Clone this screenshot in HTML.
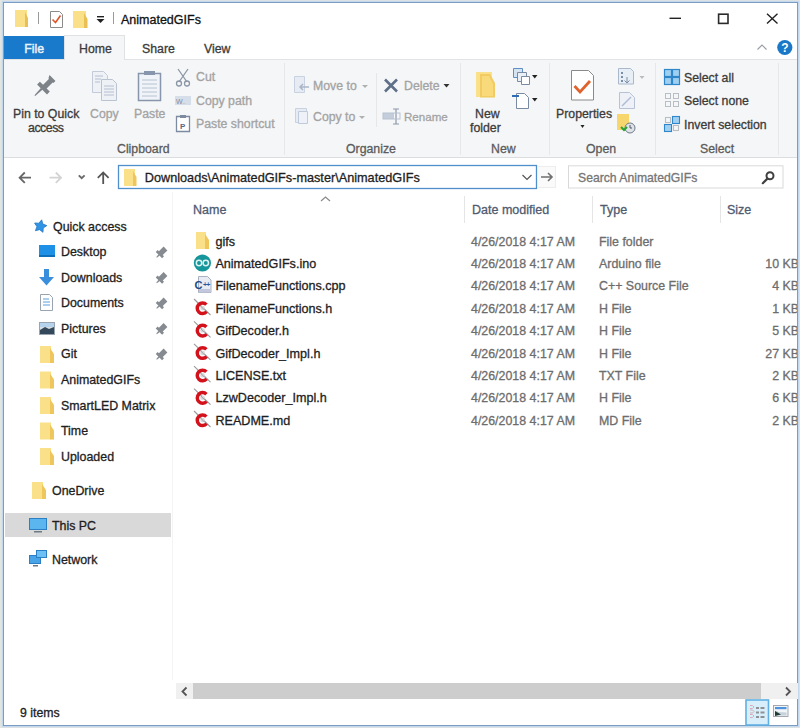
<!DOCTYPE html>
<html><head><meta charset="utf-8">
<style>
*{margin:0;padding:0;box-sizing:border-box}
html,body{width:800px;height:728px;overflow:hidden;background:#e3e5e1}
body{position:relative;font-family:"Liberation Sans",sans-serif;font-size:12.3px;color:#222}
.a{position:absolute}
.t{position:absolute;white-space:nowrap;line-height:16px;height:16px;-webkit-text-stroke-width:0.3px}
svg{position:absolute;overflow:visible}
#win{position:absolute;left:2.7px;top:1.9px;width:795.4px;height:724.2px;background:#fff;border:1.3px solid #7b9dc4;box-shadow:0 0 0 1.2px #c3d7ee}
.g{color:#a3a3a3}
.d{color:#3b3b3b}
.lab{color:#5b5b5b}
.sep{position:absolute;width:1px;background:#e6e7e8}
.fl{color:#1e1e1e;font-size:12.6px}
.fg{color:#6d6d6d;font-size:12.4px}
.nv{color:#1e1e1e;font-size:12.4px}
</style></head><body>
<div id="win"></div>

<!-- title bar -->
<svg style="left:0;top:0" width="800" height="60">
  <!-- folder 1 -->
  <path d="M15 10h12v17h-12z" fill="#f5d36b"/>
  <path d="M15 10h12v17h-12z" fill="#fbe08a"/>
  <path d="M25 12l3 6v9h-3z" fill="#e9c053"/>
  <!-- sep -->
  <rect x="38" y="12" width="1" height="12" fill="#9a9a9a"/>
  <!-- properties icon -->
  <path d="M50.5 11.5h9l3 3v13h-12z" fill="#fff" stroke="#8b8b8b"/>
  <path d="M52.5 19.5l3 3l5-7" fill="none" stroke="#e0542a" stroke-width="1.6"/>
  <!-- folder 2 -->
  <path d="M73 11h13v17h-13z" fill="#fbe08a"/>
  <path d="M84 13l3.5 6v9h-3.5z" fill="#e9c053"/>
  <!-- dropdown -->
  <rect x="97" y="16" width="7" height="1.4" fill="#222"/>
  <path d="M96.5 19h8l-4 4z" fill="#222"/>
  <rect x="113" y="12" width="1" height="12" fill="#9a9a9a"/>
  <!-- window controls -->
  <rect x="669.5" y="17.6" width="11.5" height="1.4" fill="#222"/>
  <rect x="718.6" y="14.2" width="9.4" height="9.2" fill="none" stroke="#2a2a2a" stroke-width="1.6"/>
  <path d="M767 13.8l10.5 9.8M777.5 13.8l-10.5 9.8" stroke="#222" stroke-width="1.4"/>
  <!-- ribbon collapse caret + help -->
  <path d="M757.5 49.5l4.5-4.5l4.5 4.5" fill="none" stroke="#9aa0a6" stroke-width="1.2"/>
  <circle cx="784.8" cy="47.5" r="7.6" fill="#1a78c8"/>
  <text x="785" y="52" font-family="Liberation Sans" font-size="12" font-weight="bold" fill="#fff" text-anchor="middle">?</text>
</svg>
<div class="t" style="left:121px;top:11.5px;font-size:12.5px;color:#111">AnimatedGIFs</div>

<!-- tabs -->
<div class="a" style="left:4px;top:35.5px;width:60px;height:24px;background:#1979ca"></div>
<div class="t" style="left:24.3px;top:40.8px;color:#e8f3fa;font-size:12.3px;-webkit-text-stroke-width:0.45px">File</div>
<div class="a" style="left:64px;top:35px;width:61px;height:25px;background:#f5f6f7;border:1px solid #e0e1e2;border-bottom:none"></div>
<div class="t d" style="left:79px;top:41px">Home</div>
<div class="t d" style="left:142px;top:41px">Share</div>
<div class="t d" style="left:204px;top:41px">View</div>

<!-- ribbon -->
<div class="a" style="left:4px;top:59.3px;width:793px;height:98.9px;background:#f5f6f7;border-top:1px solid #e2e3e4;border-bottom:1px solid #dcdddf"></div>
<div class="a" style="left:65px;top:59px;width:59px;height:1.5px;background:#f5f6f7"></div>


<!-- ribbon separators -->
<div class="sep" style="left:284px;top:63px;height:92px"></div>
<div class="sep" style="left:376px;top:73px;height:54px"></div>
<div class="sep" style="left:460px;top:63px;height:92px"></div>
<div class="sep" style="left:549px;top:63px;height:92px"></div>
<div class="sep" style="left:655px;top:63px;height:92px"></div>
<div class="sep" style="left:778px;top:63px;height:92px"></div>

<svg style="left:0;top:0" width="800" height="160">
  <!-- pin -->
  <g fill="#7d8389" transform="translate(52.5 78) rotate(45)">
    <path d="M-4.2 0h8.4v3h-1v8.5h4.5v4h-14v-4h4.5v-8.5h-1z"/>
    <path d="M-1.1 15h2.2l-0.6 10h-1z"/>
  </g>
  <!-- copy -->
  <path d="M92.5 71.5h11l4 4v17h-15z" fill="#eef1f6" stroke="#c3cbd8"/>
  <path d="M101.5 79.5h11l4 4v17h-15z" fill="#eef1f6" stroke="#b9c3d2"/>
  <g stroke="#b6c0cf"><path d="M95 76h8M95 79h6M95 82h5M104 86h10M104 89h10M104 92h10M104 95h10"/></g>
  <!-- paste -->
  <path d="M138.5 73.5h22v27h-22z" fill="#f0f3f8" stroke="#8796ad" stroke-width="1.5"/>
  <path d="M144 71h11v4h-11z" fill="#8796ad"/>
  <g stroke="#b7c2d2"><path d="M142 80h15M142 84h15M142 88h15M142 92h15M142 96h15"/></g>
  <!-- scissors -->
  <g fill="none" stroke="#8b96a6" stroke-width="1.3">
    <path d="M178 69l9 13M188 69l-9 13"/>
    <circle cx="179" cy="83.5" r="2.5"/><circle cx="187" cy="83.5" r="2.5"/>
  </g>
  <!-- copy path -->
  <rect x="175" y="96" width="16" height="9" fill="#d6deea"/>
  <text x="176" y="104" font-family="Liberation Sans" font-size="7" fill="#7f8da3">W<tspan font-size="5">..</tspan></text>
  <!-- paste shortcut -->
  <path d="M176.5 116.5h13v15h-13z" fill="#fff" stroke="#7d8ba0" stroke-width="1.3"/>
  <path d="M180 115h6v3h-6z" fill="#7d8ba0"/>
  <text x="180" y="129" font-family="Liberation Sans" font-size="8" font-weight="bold" fill="#5a6780">P</text>
  <!-- move to -->
  <path d="M294.5 76.5h10v16h-10z" fill="#e7ecf4" stroke="#c8d2e0"/>
  <path d="M309 87h-8M303 84l-3 3l3 3" fill="none" stroke="#aab6c8" stroke-width="1.5"/>
  <!-- copy to -->
  <path d="M295.5 108.5h11v14h-11z" fill="#e7ecf4" stroke="#c8d2e0"/>
  <path d="M298.5 111.5h9v12h-9z" fill="#eef2f8" stroke="#bfcadb"/>
  <!-- dropdown carets gray -->
  <path d="M362 85h6l-3 3z" fill="#b0b0b0"/>
  <path d="M359 116h6l-3 3z" fill="#b0b0b0"/>
  <!-- delete -->
  <path d="M385 79.5l12 12M397 79.5l-12 12" stroke="#5e6f88" stroke-width="2.6"/>
  <path d="M443.5 84h6l-3 3.5z" fill="#333"/>
  <!-- rename -->
  <rect x="383" y="113" width="11" height="6" fill="#c3cddc"/>
  <path d="M396 109v15M393 109h6M393 124h6" stroke="#8b98ac" stroke-width="1.2" fill="none"/>
  <rect x="383" y="113" width="17" height="6" fill="none" stroke="#b6c1d1"/>
  <!-- new folder -->
  <path d="M476 72h16v25h-16z" fill="#fbe08a"/>
  <path d="M480 74h10l5 9v14.5h-15z" fill="#f2cc62"/>
  <path d="M482 76h7l4 8v12h-11z" fill="#f8da7a"/>
  <!-- easy access -->
  <path d="M513.5 68.5h9v9h-9z" fill="#d5e4f3" stroke="#5f8fc4"/>
  <path d="M517.5 72.5h9v9h-9z" fill="#eaf0f7" stroke="#7a8aa0"/>
  <path d="M521.5 76.5h8v8h-8z" fill="#fff" stroke="#7a8aa0"/>
  <path d="M532 75h5.5l-2.75 3.5z" fill="#222"/>
  <!-- new item -->
  <path d="M516.5 93.5h8l4 4v11h-12z" fill="#fff" stroke="#7a8aa0"/>
  <path d="M512 96h7" stroke="#2d6db5" stroke-width="2"/>
  <path d="M532 98h5.5l-2.75 3.5z" fill="#222"/>
  <!-- properties big -->
  <path d="M571.5 70.5h17l5 5v24.5h-22z" fill="#fff" stroke="#8a8a8a"/>
  <path d="M574.5 86l5.5 6l10-11" fill="none" stroke="#e0622d" stroke-width="2.8"/>
  <path d="M580.5 125h4l-2 3z" fill="#222"/>
  <!-- open -->
  <path d="M618.5 68.5h12l3 3v12.5h-15z" fill="#e8eef6" stroke="#aab8cc"/>
  <g fill="#7b8ea8"><rect x="621" y="72" width="2" height="2"/><rect x="621" y="76" width="2" height="2"/><rect x="621" y="80" width="2" height="2"/></g>
  <path d="M627 77v6M624.5 80.5l2.5 2.5l2.5-2.5" stroke="#7b8ea8" fill="none"/>
  <path d="M639.5 76h5l-2.5 3z" fill="#bbb"/>
  <!-- edit -->
  <path d="M619.5 92.5h10l5 5v11h-15z" fill="#eef2f8" stroke="#b7c3d4"/>
  <path d="M622 106l9-9" stroke="#aebbd0" stroke-width="1.5"/>
  <!-- history -->
  <path d="M617 114h12v16h-12z" fill="#f7d76d"/>
  <circle cx="630" cy="128" r="5" fill="#dfe3e8" stroke="#6e7a88"/>
  <path d="M630 125v3h2" stroke="#4d5866" fill="none"/>
  <path d="M621 127l3 3l3-3" stroke="#2aa039" stroke-width="2" fill="none"/>
  <!-- select all -->
  <g fill="#9fd0f2" stroke="#2f86c9" stroke-width="1.2">
    <rect x="664.5" y="69.5" width="7" height="7"/><rect x="672.5" y="69.5" width="7" height="7"/>
    <rect x="664.5" y="77.5" width="7" height="7"/><rect x="672.5" y="77.5" width="7" height="7"/>
  </g>
  <!-- select none -->
  <g fill="none" stroke="#b9bec5">
    <rect x="665.5" y="93.5" width="5" height="5"/><rect x="673.5" y="93.5" width="5" height="5"/>
    <rect x="665.5" y="101.5" width="5" height="5"/><rect x="673.5" y="101.5" width="5" height="5"/>
  </g>
  <!-- invert -->
  <g stroke-width="1.1">
    <rect x="665.5" y="117.5" width="5" height="5" fill="none" stroke="#b9bec5"/>
    <rect x="672.5" y="116.5" width="7" height="7" fill="#9fd0f2" stroke="#2f86c9"/>
    <rect x="664.5" y="124.5" width="7" height="7" fill="#9fd0f2" stroke="#2f86c9"/>
    <rect x="673.5" y="125.5" width="5" height="5" fill="none" stroke="#b9bec5"/>
  </g>
</svg>

<div class="t d" style="left:13px;top:105.8px">Pin to Quick</div>
<div class="t d" style="left:28px;top:119.5px;letter-spacing:-0.45px">access</div>
<div class="t g" style="left:90px;top:106px">Copy</div>
<div class="t g" style="left:134px;top:106px">Paste</div>
<div class="t g" style="left:196px;top:69px">Cut</div>
<div class="t g" style="left:196px;top:93px">Copy path</div>
<div class="t g" style="left:196px;top:116px">Paste shortcut</div>
<div class="t lab" style="left:117px;top:141px">Clipboard</div>

<div class="t g" style="left:313px;top:78px">Move to</div>
<div class="t g" style="left:313px;top:109px">Copy to</div>
<div class="t g" style="left:404px;top:78px">Delete</div>
<div class="t g" style="left:404px;top:109px;font-size:11.6px">Rename</div>
<div class="t lab" style="left:346px;top:141px">Organize</div>

<div class="t d" style="left:475px;top:105.5px">New</div>
<div class="t d" style="left:470px;top:119.5px">folder</div>
<div class="t lab" style="left:491px;top:141px">New</div>

<div class="t d" style="left:556px;top:106px">Properties</div>
<div class="t lab" style="left:586px;top:141px">Open</div>

<div class="t d" style="left:684px;top:70px">Select all</div>
<div class="t d" style="left:684px;top:92.8px">Select none</div>
<div class="t d" style="left:684px;top:117px">Invert selection</div>
<div class="t lab" style="left:700px;top:141px">Select</div>


<!-- address bar row -->
<svg style="left:0;top:150px" width="800" height="60">
  <!-- back -->
  <path d="M19.5 27.7h11.5M24.8 22.5l-5.2 5.2l5.2 5.2" fill="none" stroke="#666" stroke-width="1.8"/>
  <!-- forward -->
  <path d="M49.5 27.7h11.5M55.8 22.5l5.2 5.2l-5.2 5.2" fill="none" stroke="#d3d3d3" stroke-width="1.8"/>
  <!-- chevron -->
  <path d="M78.8 25.3l2.9 2.9l2.9-2.9" fill="none" stroke="#6b6b6b" stroke-width="1.9"/>
  <!-- up -->
  <path d="M103.2 34v-11.5M97.8 27.8l5.4-5.4l5.4 5.4" fill="none" stroke="#555" stroke-width="1.8"/>
  <!-- address box -->
  <rect x="118.5" y="15.5" width="418" height="23" fill="#fff" stroke="#4f8fcb" stroke-width="1.3"/>
  <path d="M124 19h11v17h-11z" fill="#fbe08a"/>
  <path d="M133 21l3.5 6v9h-3.5z" fill="#eec65b"/>
  <path d="M522.5 25l4.5 4.5l4.5-4.5" fill="none" stroke="#555" stroke-width="1.2"/>
  <!-- go arrow box -->
  <rect x="537.5" y="16.5" width="18" height="21" fill="#fafafa" stroke="#ededed"/>
  <path d="M541 27h11M548 23l4 4l-4 4" fill="none" stroke="#6f6f6f" stroke-width="1.6"/>
  <!-- search -->
  <rect x="568.5" y="15.8" width="214.5" height="22.2" fill="#fff" stroke="#d9d9d9"/>
  <circle cx="770" cy="25.8" r="3.5" fill="none" stroke="#404040" stroke-width="2"/>
  <path d="M767.4 28.6l-4.6 4.6" stroke="#404040" stroke-width="2.2" stroke-linecap="round"/>
</svg>
<div class="t" style="left:144.8px;top:170.3px;font-size:12.7px;color:#1e1e1e">Downloads\AnimatedGIFs-master\AnimatedGIFs</div>
<div class="t" style="left:578px;top:170px;font-size:12.2px;color:#767676">Search AnimatedGIFs</div>

<!-- nav pane -->
<div class="a" style="left:4.5px;top:512.8px;width:166px;height:23.8px;background:#d9d9d9"></div>
<div class="sep" style="left:172px;top:192px;height:488px;background:#f4f4f4"></div>
<svg style="left:0;top:200px" width="180" height="380">
  <!-- star -->
  <path d="M41.67 19.84 L42.83 24.02 L46.86 25.61 L43.24 28.00 L42.98 32.33 L39.59 29.63 L35.40 30.72 L36.92 26.66 L34.58 23.00 L38.92 23.19z" fill="#2f93e6" stroke="#2a78c0" stroke-width="0.8" stroke-linejoin="round"/>
  <!-- desktop -->
  <rect x="39" y="45" width="16" height="12" fill="#1e90e6"/>
  <rect x="39" y="55" width="16" height="2" fill="#0f6fb8"/>
  <!-- downloads -->
  <path d="M44 69h5v8h5l-7.5 8.5l-7.5-8.5h5z" fill="#3a8fdc"/>
  <!-- documents -->
  <path d="M40.5 94.5h9l3 3v13h-12z" fill="#fff" stroke="#9aa4b0"/>
  <path d="M43 99h6M43 102h7M43 105h7" stroke="#5aa0db" stroke-width="1.2"/>
  <!-- pictures -->
  <rect x="39.5" y="122.5" width="15" height="12" fill="#d7dde3" stroke="#9aa4b0"/>
  <path d="M40 130l5-3l4 2l5-2v7h-14z" fill="#33485a"/>
  <rect x="40" y="123" width="14" height="4" fill="#b5d3ec"/>
  <!-- pins -->
  <g fill="#868b91">
    <g transform="translate(165.5 48.5) rotate(45) scale(0.6)"><path d="M-4.5 0h9v11h3v4.5h-15v-4.5h3z"/><path d="M-1.5 15h3l-0.8 6h-1.4z"/></g>
    <g transform="translate(165.5 74.0) rotate(45) scale(0.6)"><path d="M-4.5 0h9v11h3v4.5h-15v-4.5h3z"/><path d="M-1.5 15h3l-0.8 6h-1.4z"/></g>
    <g transform="translate(165.5 99.5) rotate(45) scale(0.6)"><path d="M-4.5 0h9v11h3v4.5h-15v-4.5h3z"/><path d="M-1.5 15h3l-0.8 6h-1.4z"/></g>
    <g transform="translate(165.5 125.0) rotate(45) scale(0.6)"><path d="M-4.5 0h9v11h3v4.5h-15v-4.5h3z"/><path d="M-1.5 15h3l-0.8 6h-1.4z"/></g>
    <g transform="translate(165.5 150.5) rotate(45) scale(0.6)"><path d="M-4.5 0h9v11h3v4.5h-15v-4.5h3z"/><path d="M-1.5 15h3l-0.8 6h-1.4z"/></g>
  </g>
  <!-- folders -->
  <g id="nf"><path d="M40 146h11v17h-11z" fill="#fbe08a"/><path d="M50 148l4 6v9h-4z" fill="#eec65b"/></g>
  <use href="#nf" y="25.5"/><use href="#nf" y="51"/><use href="#nf" y="76.5"/><use href="#nf" y="102"/>
  <!-- onedrive folder -->
  <path d="M32 282h11v17h-11z" fill="#fbe08a"/><path d="M42 284l4 6v9h-4z" fill="#eec65b"/>
  <!-- this PC -->
  <rect x="29.5" y="318.5" width="17" height="11" fill="#5bb6f0" stroke="#2b7fc4"/>
  <rect x="34" y="331" width="8" height="1.5" fill="#6d7a86"/>
  <!-- network -->
  <rect x="29.5" y="355.5" width="11" height="8" fill="#48a4e6" stroke="#2b7fc4"/>
  <rect x="36.5" y="350.5" width="10" height="7" fill="#6cc0f4" stroke="#2b7fc4"/>
  <rect x="33" y="365" width="5" height="1.5" fill="#6d7a86"/>
</svg>
<div class="t nv" style="left:53px;top:218.5px">Quick access</div>
<div class="t nv" style="left:61px;top:244px">Desktop</div>
<div class="t nv" style="left:61px;top:269.5px">Downloads</div>
<div class="t nv" style="left:61px;top:295px">Documents</div>
<div class="t nv" style="left:61px;top:320.5px">Pictures</div>
<div class="t nv" style="left:61px;top:346.3px">Git</div>
<div class="t nv" style="left:61px;top:371.8px">AnimatedGIFs</div>
<div class="t nv" style="left:61px;top:397.5px">SmartLED Matrix</div>
<div class="t nv" style="left:61px;top:423px">Time</div>
<div class="t nv" style="left:61px;top:448.5px">Uploaded</div>
<div class="t nv" style="left:52px;top:483px">OneDrive</div>
<div class="t nv" style="left:52px;top:517.5px">This PC</div>
<div class="t nv" style="left:52px;top:552px">Network</div>

<!-- column headers -->
<svg style="left:0;top:190px" width="800" height="40">
  <path d="M321 11l4.5-4l4.5 4" fill="none" stroke="#8a8a8a" stroke-width="1.2"/>
  <rect x="464" y="6" width="1" height="27" fill="#e5e5e5"/>
  <rect x="592" y="6" width="1" height="27" fill="#e5e5e5"/>
  <rect x="720" y="6" width="1" height="27" fill="#e5e5e5"/>
</svg>
<div class="t" style="left:193px;top:202px;color:#4f5b70;font-size:12.5px">Name</div>
<div class="t" style="left:472px;top:202px;color:#4f5b70;font-size:12.5px">Date modified</div>
<div class="t" style="left:600px;top:202px;color:#4f5b70;font-size:12.5px">Type</div>
<div class="t" style="left:727px;top:202px;color:#4f5b70;font-size:12.5px">Size</div>


<!-- file list -->
<svg style="left:0;top:0" width="800" height="728">
<defs>
<g id="ifold"><path d="M196 232h10v17h-10z" fill="#fbe08a"/><path d="M205 234l4 6v9h-4z" fill="#eec65b"/></g>
<g id="ired"><path d="M194 -2.5L210.5 13.5" stroke="#9a9a9a" stroke-width="1.1"/><path d="M206.4 3.1A5.3 5.3 0 1 0 206.6 10.2" fill="none" stroke="#d3121c" stroke-width="3.5"/><circle cx="202.6" cy="6.6" r="2.3" fill="#d8d8d8"/><path d="M200.5 4.5L204.8 8.8" stroke="#a0a0a0" stroke-width="1"/></g>
</defs>
<circle cx="202.4" cy="263" r="8.6" fill="#15969a"/><g fill="none" stroke="#dff2f2" stroke-width="1.5"><circle cx="199" cy="263" r="2.7"/><circle cx="205.8" cy="263" r="2.7"/></g>
<path d="M198.5 276.5h9l3.5 3.5v12.5h-12.5z" fill="#e9ebf3" stroke="#a9b0c4"/><rect x="199" y="289" width="11.5" height="3.5" fill="#c3c7dc"/><text x="194.5" y="288.8" font-family="Liberation Sans" font-size="11" font-weight="bold" fill="#234a86">C</text><text x="203" y="287" font-family="Liberation Sans" font-size="7" font-weight="bold" fill="#2c5aa0" letter-spacing="-0.8">++</text>
<use href="#ired" y="301.5"/>
<use href="#ired" y="323.9"/>
<use href="#ired" y="346.3"/>
<use href="#ired" y="368.7"/>
<use href="#ired" y="391.1"/>
<use href="#ired" y="413.5"/>
<use href="#ifold"/>
</svg>
<div class="t fl" style="left:215.4px;top:233.6px">gifs</div>
<div class="t fg" style="left:471px;top:233.6px">4/26/2018 4:17 AM</div>
<div class="t fg" style="left:599px;top:233.6px">File folder</div>
<div class="t fl" style="left:215.4px;top:256.0px">AnimatedGIFs.ino</div>
<div class="t fg" style="left:471px;top:256.0px">4/26/2018 4:17 AM</div>
<div class="t fg" style="left:599px;top:256.0px">Arduino file</div>
<div class="t fl" style="left:215.4px;top:278.4px">FilenameFunctions.cpp</div>
<div class="t fg" style="left:471px;top:278.4px">4/26/2018 4:17 AM</div>
<div class="t fg" style="left:599px;top:278.4px">C++ Source File</div>
<div class="t fl" style="left:215.4px;top:300.8px">FilenameFunctions.h</div>
<div class="t fg" style="left:471px;top:300.8px">4/26/2018 4:17 AM</div>
<div class="t fg" style="left:599px;top:300.8px">H File</div>
<div class="t fl" style="left:215.4px;top:323.2px">GifDecoder.h</div>
<div class="t fg" style="left:471px;top:323.2px">4/26/2018 4:17 AM</div>
<div class="t fg" style="left:599px;top:323.2px">H File</div>
<div class="t fl" style="left:215.4px;top:345.6px">GifDecoder_Impl.h</div>
<div class="t fg" style="left:471px;top:345.6px">4/26/2018 4:17 AM</div>
<div class="t fg" style="left:599px;top:345.6px">H File</div>
<div class="t fl" style="left:215.4px;top:368.0px">LICENSE.txt</div>
<div class="t fg" style="left:471px;top:368.0px">4/26/2018 4:17 AM</div>
<div class="t fg" style="left:599px;top:368.0px">TXT File</div>
<div class="t fl" style="left:215.4px;top:390.4px">LzwDecoder_Impl.h</div>
<div class="t fg" style="left:471px;top:390.4px">4/26/2018 4:17 AM</div>
<div class="t fg" style="left:599px;top:390.4px">H File</div>
<div class="t fl" style="left:215.4px;top:412.8px">README.md</div>
<div class="t fg" style="left:471px;top:412.8px">4/26/2018 4:17 AM</div>
<div class="t fg" style="left:599px;top:412.8px">MD File</div>

<div class="a" style="left:720px;top:200px;width:77px;height:240px;overflow:hidden">
<div class="t fg" style="right:-2px;top:56.0px;text-align:right">10 KB</div>
<div class="t fg" style="right:-2px;top:78.4px;text-align:right">4 KB</div>
<div class="t fg" style="right:-2px;top:100.8px;text-align:right">1 KB</div>
<div class="t fg" style="right:-2px;top:123.2px;text-align:right">5 KB</div>
<div class="t fg" style="right:-2px;top:145.6px;text-align:right">27 KB</div>
<div class="t fg" style="right:-2px;top:168.0px;text-align:right">2 KB</div>
<div class="t fg" style="right:-2px;top:190.4px;text-align:right">6 KB</div>
<div class="t fg" style="right:-2px;top:212.8px;text-align:right">2 KB</div>
</div>
<!-- h scrollbar -->
<div class="a" style="left:175.5px;top:683px;width:622px;height:16px;background:#f0f0f0"></div>
<div class="a" style="left:193px;top:683px;width:568px;height:16px;background:#cdcdcd"></div>
<svg style="left:0;top:0" width="800" height="728">
  <path d="M186.5 687.5l-4 4l4 4" fill="none" stroke="#555" stroke-width="1.8"/>
  <path d="M786 687.5l4 4l-4 4" fill="none" stroke="#555" stroke-width="1.8"/>
  <!-- view buttons -->
  <rect x="746" y="700" width="22.5" height="25" fill="#d9eefb" stroke="#5fb0e3" stroke-width="1.6"/>
  <g fill="#8c9196"><rect x="756" y="707" width="3" height="2"/><rect x="760.5" y="707" width="4" height="2"/><rect x="756" y="711.5" width="3" height="2"/><rect x="760.5" y="711.5" width="4" height="2"/><rect x="756" y="716" width="3" height="2"/><rect x="760.5" y="716" width="4" height="2"/></g>
  <g fill="none" stroke="#d6a6a8" stroke-width="0.9"><path d="M750 705.5h2.5l1.5 1.5l-1.5 1.5h-2.5"/><path d="M750 710h2.5l1.5 1.5l-1.5 1.5h-2.5"/><path d="M750 714.5h2.5l1.5 1.5l-1.5 1.5h-2.5"/></g>
  <rect x="773.5" y="705.5" width="14.5" height="11" fill="#f2f5f8" stroke="#a3a8ae"/>
  <rect x="775" y="707" width="11.5" height="2.2" fill="#4f93dc"/>
  <path d="M775 710.5l4 1.5l7.5 0.5v3h-11.5z" fill="#c5d2dc"/>
  <path d="M775 711l6 3.5l-6 1.5z" fill="#1f3d33"/>
</svg>
<div class="t" style="left:20px;top:705px;font-size:12.3px;color:#1e1e1e">9 items</div>

</body></html>
